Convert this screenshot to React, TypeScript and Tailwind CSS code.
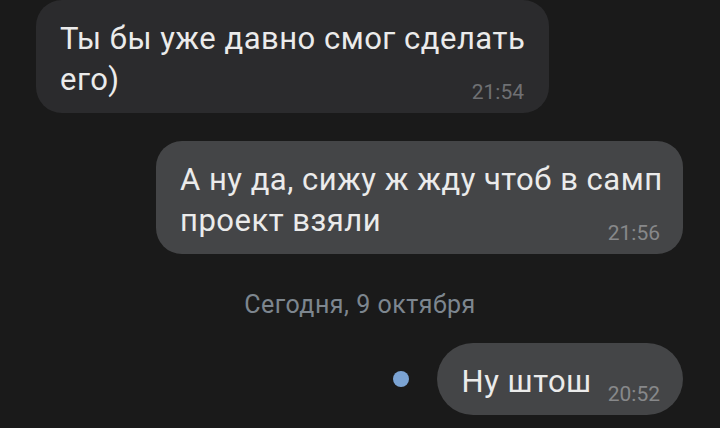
import React from "react";

const font = { fontFamily: "Roboto, 'Noto Sans', sans-serif" };

export default function App() {
  return (
    <div
      className="w-[720px] h-[428px] overflow-hidden bg-[#1a1a1a] flex flex-col pl-[36px] pr-[37px]"
      style={font}
    >
      {/* incoming */}
      <div className="self-start w-[513px] flex flex-col bg-[#2b2b2d] rounded-[26px] pt-[18px] pb-[10px] pl-[24px] pr-[25px]">
        <div className="text-[31px] leading-[41px] tracking-[0.5px] text-[#ebebeb] whitespace-nowrap">
          Ты бы уже давно смог сделать
          <br />
          его)
        </div>
        <div className="self-end -mt-[18px] text-[21px] leading-[21px] text-[#6f7073]">21:54</div>
      </div>

      {/* outgoing */}
      <div className="self-end mt-[28px] w-[527px] flex flex-col bg-[#444547] rounded-[26px] pt-[18px] pb-[10px] pl-[24px] pr-[23px]">
        <div className="text-[31px] leading-[41px] tracking-[0.5px] text-[#ebebeb] whitespace-nowrap">
          А ну да, сижу ж жду чтоб в самп
          <br />
          проект взяли
        </div>
        <div className="self-end -mt-[18px] text-[21px] leading-[21px] text-[#87888a]">21:56</div>
      </div>

      <div className="mt-[35px] -mr-[1px] text-center text-[25px] leading-[32px] tracking-[0.5px] text-[#7d868f]">
        Сегодня, 9 октября
      </div>

      <div className="self-end mt-[22px] flex items-center gap-[28px]">
        <div className="w-[16px] h-[16px] rounded-full bg-[#7ba3d3]" />
        <div className="flex items-end gap-[16px] bg-[#444547] rounded-full pt-[18px] pb-[13px] pl-[25px] pr-[23px]">
          <div className="text-[31px] leading-[41px] tracking-[0.5px] text-[#ebebeb] whitespace-nowrap">Ну штош</div>
          <div className="-mb-[3px] text-[21px] leading-[21px] text-[#87888a]">20:52</div>
        </div>
      </div>
    </div>
  );
}
